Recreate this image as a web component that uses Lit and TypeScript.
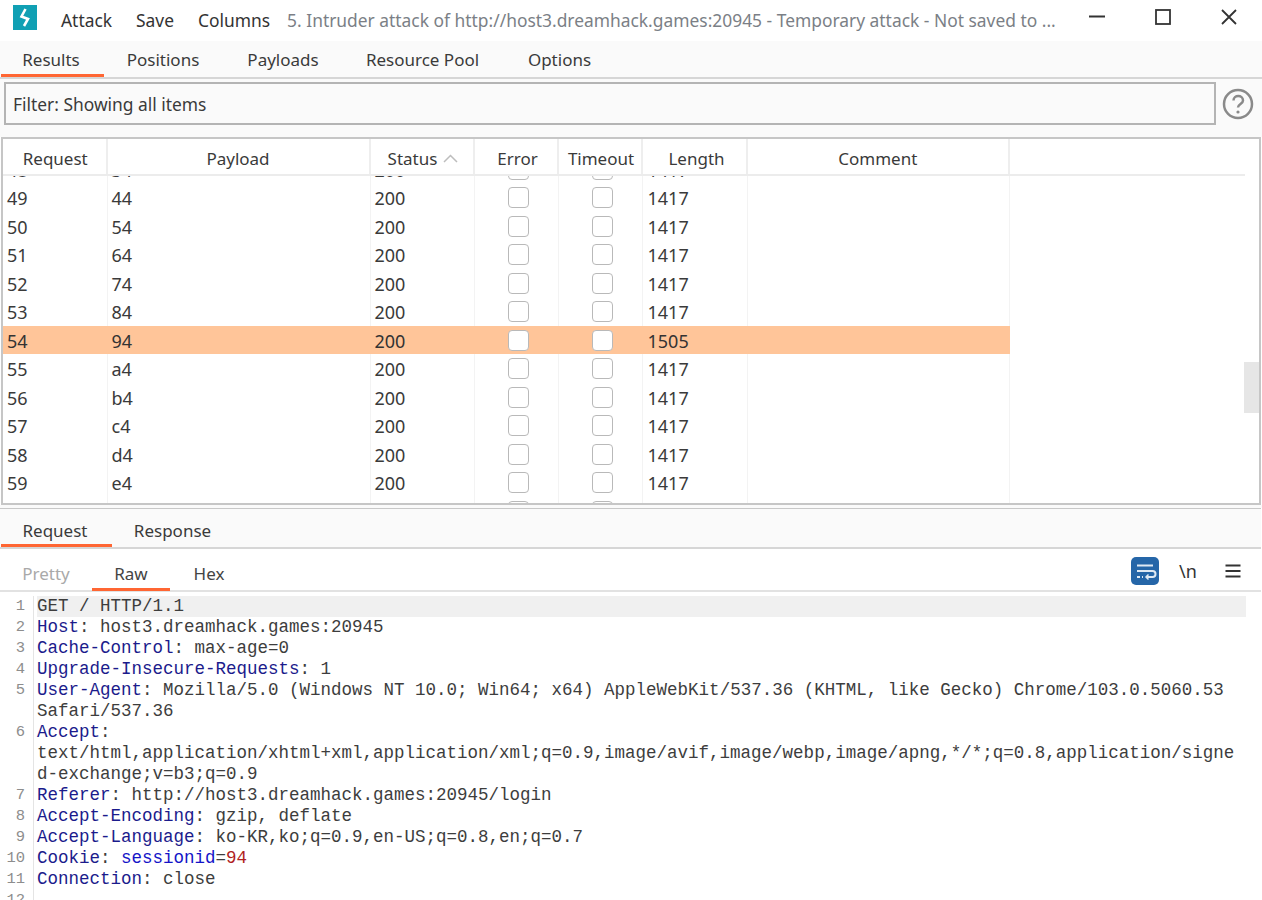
import { LitElement, html, css } from "lit";
import { customElement } from "lit/decorators.js";

const rows: [number, string, number][] = [
  [48, "34", 1417], [49, "44", 1417], [50, "54", 1417], [51, "64", 1417], [52, "74", 1417], [53, "84", 1417],
  [54, "94", 1505], [55, "a4", 1417], [56, "b4", 1417], [57, "c4", 1417], [58, "d4", 1417], [59, "e4", 1417], [60, "f4", 1417],
];
const K = (s: string) => html`<span class="k">${s}</span>`;
const lines = [
  [html`GET / HTTP/1.1`],
  [html`${K("Host")}: host3.dreamhack.games:20945`],
  [html`${K("Cache-Control")}: max-age=0`],
  [html`${K("Upgrade-Insecure-Requests")}: 1`],
  [html`${K("User-Agent")}: Mozilla/5.0 (Windows NT 10.0; Win64; x64) AppleWebKit/537.36 (KHTML, like Gecko) Chrome/103.0.5060.53`, html`Safari/537.36`],
  [html`${K("Accept")}:`, html`text/html,application/xhtml+xml,application/xml;q=0.9,image/avif,image/webp,image/apng,*/*;q=0.8,application/signe`, html`d-exchange;v=b3;q=0.9`],
  [html`${K("Referer")}: http://host3.dreamhack.games:20945/login`],
  [html`${K("Accept-Encoding")}: gzip, deflate`],
  [html`${K("Accept-Language")}: ko-KR,ko;q=0.9,en-US;q=0.8,en;q=0.7`],
  [html`${K("Cookie")}: <span class="n">sessionid</span>=<span class="v">94</span>`],
  [html`${K("Connection")}: close`],
  [html``],
];

@customElement("app-root")
export class AppRoot extends LitElement {
  static styles = css`
    :host { display: block; height: 900px; overflow: hidden; background: #fff; color: #3a3a3a;
      font-family: "Noto Sans", "Noto Sans CJK KR", sans-serif; font-size: 17.4px; }
    .title { height: 41px; display: flex; align-items: center; background: #fff; padding: 0 0 1px 13px; box-sizing: border-box; }
    .logo { flex: none; width: 24px; height: 25px; margin-right: 24px; margin-bottom: 6px; display: block; }
    .menu { flex: none; margin-right: 24px; color: #333; }
    .caption { color: #7b7f86; white-space: nowrap; flex: 1; min-width: 0; margin-left: -7px; overflow: hidden; }
    .wb { flex: none; width: 179px; height: 30px; display: block; margin-bottom: 6px; }
    .tabs { display: flex; background: #fafafa; border-bottom: 2px solid #d6d6d6; font-size: 17px; }
    .tab { box-sizing: border-box; text-align: center; border-bottom: 3px solid transparent; color: #3a3a3a; }
    .tab.on { border-bottom-color: #ff6633; padding-right: 3px; }
    .t1 { height: 36px; line-height: 38px; }
    .filterbar { display: flex; align-items: center; background: #fafafa; padding: 3px 8px 0 4px; height: 46px; box-sizing: border-box; gap: 6px; }
    .filter { flex: 1; height: 43px; box-sizing: border-box; border: 2px solid #b4b4b4; background: #fafafa; line-height: 41px; padding-left: 7px; }
    .help { width: 32px; height: 32px; display: block; }
    .gap { height: 12px; background: #fafafa; }
    .table { position: relative; margin-left: 1px; width: 1260px; height: 368px; box-sizing: border-box; border: 2px solid #c6c6c6; background: #fff; overflow: hidden; }
    .grid { display: grid; grid-template-columns: 104.5px 263px 104px 84px 84px 105px 262.5px 1fr; }
    .head { height: 35px; border-bottom: 2px solid #ececec; margin-right: 14px; font-size: 17px; }
    .head > div { text-align: center; line-height: 31px; padding-top: 4px; border-right: 2px solid #eee; height: 35px; box-sizing: border-box; white-space: nowrap; }
    .head > div:last-child { border-right: none; }
    .head > .req { padding-left: 2px; }
    .head > .err { padding-left: 4px; }
    .head > .len { padding-left: 5px; }
    .head > .tmo { padding-left: 3px; }
    .status { display: inline-flex; align-items: center; gap: 6px; padding-left: 3px; }
    .status svg { width: 15px; height: 9px; display: block; }
    .body { height: 327px; overflow: hidden; position: relative; }
    .inner { margin-top: -21.25px; }
    .row { height: 28.5px; font-size: 18px; }
    .row > div { line-height: 31.5px; height: 28.5px; padding-left: 4px; border-right: 1px solid #f3f3f3; box-sizing: border-box; overflow: hidden; }
    .row > div.len { padding-left: 5px; }
    .row > div:last-child { border-right: none; }
    .row.sel > div:not(:last-child) { background: #ffc599; border-right-color: #ffc599; color: #333; }
    .cb { display: flex; justify-content: center; align-items: center; height: 100%; padding: 0 0 0 4px; box-sizing: border-box; }
    .row > div.c { padding-left: 0; }
    .cb i { display: block; width: 21px; height: 21px; box-sizing: border-box; border: 1.5px solid #b9b9b9; border-radius: 4px; background: #fff; }
    .thumb { position: absolute; right: 0; top: 223px; width: 15px; height: 51px; background: #e6e6e6; }
    .split { height: 3px; background: #fafafa; }
    .bar2 { border-top: 1.5px solid #c8c8c8; background: #fafafa; margin-right: 1px; }
    .t2 { height: 38px; line-height: 43px; }
    .sub { display: flex; align-items: flex-start; height: 42.5px; border-bottom: 2px solid #e2e2e2; margin-right: 1px; box-sizing: border-box; font-size: 17px; }
    .st { height: 41.5px; line-height: 50px; text-align: center; box-sizing: border-box; border-bottom: 3px solid transparent; color: #444; }
    .st.on { border-bottom-color: #ff6633; }
    .st.dim { color: #a9a9a9; }
    .tools { margin-left: auto; display: flex; align-items: center; margin-right: 19px; margin-top: 7.5px; }
    .wrap { width: 28px; height: 28px; display: block; margin-right: 19px; }
    .nl { width: 20px; margin-right: 26px; color: #333; text-align: center; font-size: 18px; }
    .burger { width: 18px; height: 16px; display: block; }
    .editor { font-family: "Liberation Mono", monospace; font-size: 17.5px; line-height: 21px; color: #3d3d3d; padding-top: 4.5px; }
    .ln { display: grid; grid-template-columns: 34px 1fr; column-gap: 3px; }
    .no { text-align: right; color: #8d8d8d; border-right: 1px solid #e4e4e4; padding-right: 8px; font-size: 15.5px; }
    .tx { white-space: pre; min-height: 21px; }
    .ln.cur .tx { background: #f0f0f0; width: 1209px; }
    .k { color: #1b1b8c; }
    .n { color: #1414c8; }
    .v { color: #b01e1e; }
  `;

  render() {
    return html`
      <div class="title">
        <svg class="logo" viewBox="0 0 24 25"><rect width="24" height="25" fill="#10a0b4"/><path d="M12.500 4 8.500 11.500 15 14 11 21" fill="none" stroke="#fff" stroke-width="2.600"/></svg>
        <span class="menu">Attack</span><span class="menu">Save</span><span class="menu">Columns</span>
        <span class="caption">5. Intruder attack of http://host3.dreamhack.games:20945 - Temporary attack - Not saved to ...</span>
        <svg class="wb" viewBox="0 0 179 30"><path d="M6 14.500H22" stroke="#333" stroke-width="2"/><rect x="73" y="8" width="14" height="14" fill="none" stroke="#333" stroke-width="1.800"/><path d="M139 8l14 14M153 8l-14 14" stroke="#333" stroke-width="1.800"/></svg>
      </div>
      <div class="tabs t1">
        <div class="tab on" style="width:103px;margin-left:1px">Results</div>
        <div class="tab" style="width:118px">Positions</div>
        <div class="tab" style="width:122px">Payloads</div>
        <div class="tab" style="width:157px">Resource Pool</div>
        <div class="tab" style="width:117px">Options</div>
      </div>
      <div class="filterbar">
        <div class="filter">Filter: Showing all items</div>
        <svg class="help" viewBox="0 0 32 32"><circle cx="16" cy="16" r="14" fill="none" stroke="#8a8a8a" stroke-width="2.500"/><path d="M11.500 12.500c0-6 9.500-6 9.500 0 0 3.500-5 3.500-5 7" fill="none" stroke="#8a8a8a" stroke-width="2.500"/><circle cx="16" cy="24" r="1.600" fill="#8a8a8a"/></svg>
      </div>
      <div class="gap"></div>
      <div class="table">
        <div class="grid head">
          <div class="req">Request</div><div>Payload</div>
          <div><span class="status">Status <svg viewBox="0 0 15 9"><path d="M1 8l6.500-6.500L14 8" fill="none" stroke="#bdbdbd" stroke-width="1.500"/></svg></span></div>
          <div class="err">Error</div><div class="tmo">Timeout</div><div class="len">Length</div><div>Comment</div><div></div>
        </div>
        <div class="body"><div class="inner">
          ${rows.map(([r, p, l]) => html`
            <div class="grid row ${r === 54 ? "sel" : ""}">
              <div>${r}</div><div>${p}</div><div>200</div>
              <div class="c"><div class="cb"><i></i></div></div>
              <div class="c"><div class="cb"><i></i></div></div>
              <div class="len">${l}</div><div></div><div></div>
            </div>`)}
        </div></div>
        <div class="thumb"></div>
      </div>
      <div class="split"></div>
      <div class="bar2">
        <div class="tabs t2">
          <div class="tab on" style="width:111px;margin-left:1px">Request</div>
          <div class="tab" style="width:121px">Response</div>
        </div>
      </div>
      <div class="sub">
        <div class="st dim" style="width:92px">Pretty</div>
        <div class="st on" style="width:78px">Raw</div>
        <div class="st" style="width:78px">Hex</div>
        <div class="tools">
          <svg class="wrap" viewBox="0 0 28 28"><rect width="28" height="28" rx="5" fill="#2566a8"/><path d="M6 8.500h16M6 14h15.500a3 3 0 0 1 0 6H16" fill="none" stroke="#dfe9f3" stroke-width="2"/><path d="M6 20h3M11 20h1" stroke="#dfe9f3" stroke-width="2"/><path d="M17.500 17.500 15 20l2.500 2.500" fill="none" stroke="#dfe9f3" stroke-width="1.500"/></svg>
          <span class="nl">\\n</span>
          <svg class="burger" viewBox="0 0 18 16"><path d="M1.500 2.500h15M1.500 8h15M1.500 13.500h15" stroke="#333" stroke-width="2"/></svg>
        </div>
      </div>
      <div class="editor">
        ${lines.map((l, i) => l.map((t, j) => html`<div class="ln ${i === 0 ? "cur" : ""}"><div class="no">${j === 0 ? i + 1 : ""}</div><div class="tx">${t}</div></div>`))}
      </div>
    `;
  }
}
